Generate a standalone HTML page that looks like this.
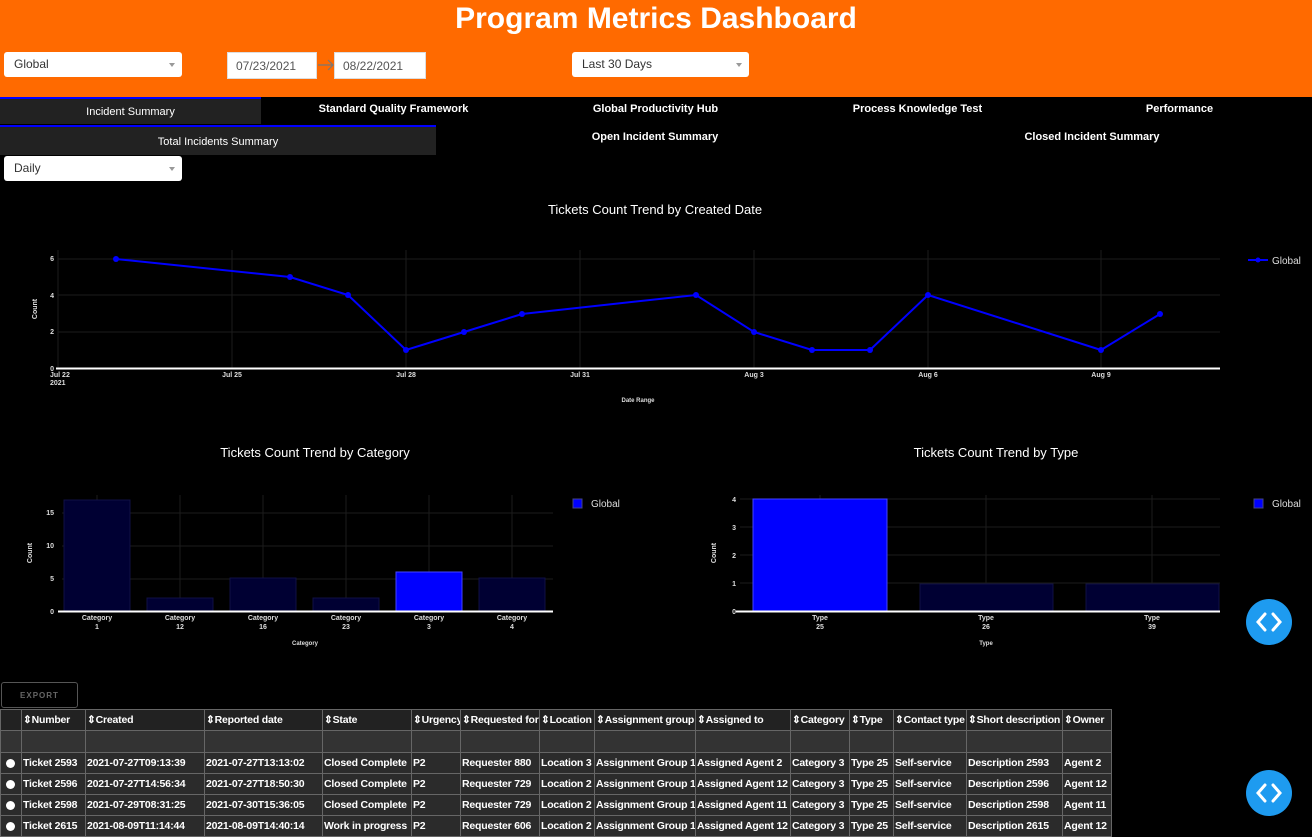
<!DOCTYPE html>
<html><head><meta charset="utf-8"><style>
*{box-sizing:border-box;margin:0;padding:0}
body{width:1312px;height:835px;background:#000;font-family:"Liberation Sans",sans-serif;position:relative;overflow:hidden;color:#fff}
.hdr{position:absolute;left:0;top:0;width:1312px;height:97px;background:#ff6a00}
.title{position:absolute;left:0;width:1312px;top:2px;text-align:center;font-size:30px;font-weight:bold;color:#fff}
.dd{position:absolute;background:#fff;border-radius:3px;color:#333;font-size:12px;padding:0 10px;line-height:24px;height:25px}
.dd:after{content:"";position:absolute;right:7px;top:11px;border:3.5px solid transparent;border-top:4px solid #999}
.date{position:absolute;top:52px;height:27px;background:#fff;border:1px solid #ddd;color:#555;font-size:12px;line-height:26px;padding-left:8px}
.tab{position:absolute;font-size:11px;font-weight:bold;text-align:center;color:#fff}
.tabsel{position:absolute;background:#222;border-top:2px solid #00f;font-size:11px;text-align:center;color:#fff}
svg text{font-family:"Liberation Sans",sans-serif}
table{position:absolute;left:0;top:709px;border-collapse:collapse;font-size:10.5px;font-weight:bold;color:#fff;table-layout:fixed;width:1111px;letter-spacing:-0.2px}
td{border:1px solid #666;background:#2b2b2b;height:21px;padding:0 1px;white-space:nowrap;overflow:hidden}
tr.h td{background:#222}
tr.f td{background:#333;height:22px}
.rd{display:inline-block;width:9px;height:9px;border-radius:50%;background:#fff;margin-left:4px;vertical-align:middle}
.btn{position:absolute;width:46px;height:46px;border-radius:50%;background:#1e9bf0}
</style></head><body>
<div class="hdr"></div>
<div class="title">Program Metrics Dashboard</div>
<div class="dd" style="left:4px;top:52px;width:178px">Global</div>
<div class="date" style="left:227px;width:90px">07/23/2021</div>
<svg style="position:absolute;left:317px;top:58px" width="18" height="14"><path d="M1 7 H16 M11 2 L16 7 L11 12" stroke="#777" stroke-width="1.2" fill="none"/></svg>
<div class="date" style="left:334px;width:92px">08/22/2021</div>
<div class="dd" style="left:572px;top:52px;width:177px">Last 30 Days</div>

<div class="tabsel" style="left:0;top:97px;width:261px;height:27px;line-height:27px">Incident Summary</div>
<div class="tab" style="left:263px;top:103px;width:261px">Standard Quality Framework</div>
<div class="tab" style="left:525px;top:103px;width:261px">Global Productivity Hub</div>
<div class="tab" style="left:787px;top:103px;width:261px">Process Knowledge Test</div>
<div class="tab" style="left:1049px;top:103px;width:261px">Performance</div>
<div class="tabsel" style="left:0;top:125px;width:436px;height:30px;line-height:30px">Total Incidents Summary</div>
<div class="tab" style="left:437px;top:131px;width:436px">Open Incident Summary</div>
<div class="tab" style="left:874px;top:131px;width:436px">Closed Incident Summary</div>
<div class="dd" style="left:4px;top:156px;width:178px">Daily</div>

<svg style="position:absolute;left:0;top:0" width="1312" height="700">
<text x="655" y="214" font-size="13" fill="#fff" text-anchor="middle">Tickets Count Trend by Created Date</text>
<g stroke="#1c1c1c" stroke-width="1">
<line x1="58" y1="259" x2="1220" y2="259"/><line x1="58" y1="295" x2="1220" y2="295"/><line x1="58" y1="332" x2="1220" y2="332"/>
<line x1="232" y1="250" x2="232" y2="368"/><line x1="406" y1="250" x2="406" y2="368"/><line x1="580" y1="250" x2="580" y2="368"/><line x1="754" y1="250" x2="754" y2="368"/><line x1="928" y1="250" x2="928" y2="368"/><line x1="1101" y1="250" x2="1101" y2="368"/><line x1="58" y1="250" x2="58" y2="368"/>
</g>
<line x1="56" y1="368.5" x2="1220" y2="368.5" stroke="#fff" stroke-width="2"/>
<polyline fill="none" stroke="#00f" stroke-width="2" points="116,259 290,277 348,295 406,350 464,332 522,314 696,295 754,332 812,350 870,350 928,295 1101,350 1160,314"/>
<g fill="#00f"><circle cx="116" cy="259" r="3"/><circle cx="290" cy="277" r="3"/><circle cx="348" cy="295" r="3"/><circle cx="406" cy="350" r="3"/><circle cx="464" cy="332" r="3"/><circle cx="522" cy="314" r="3"/><circle cx="696" cy="295" r="3"/><circle cx="754" cy="332" r="3"/><circle cx="812" cy="350" r="3"/><circle cx="870" cy="350" r="3"/><circle cx="928" cy="295" r="3"/><circle cx="1101" cy="350" r="3"/><circle cx="1160" cy="314" r="3"/></g>
<g font-size="7" fill="#ddd" font-weight="bold"><text x="54" y="261" text-anchor="end">6</text><text x="54" y="298" text-anchor="end">4</text><text x="54" y="334" text-anchor="end">2</text><text x="54" y="371" text-anchor="end">0</text>
<text x="50" y="377">Jul 22</text><text x="50" y="385">2021</text><text x="232" y="377" text-anchor="middle">Jul 25</text><text x="406" y="377" text-anchor="middle">Jul 28</text><text x="580" y="377" text-anchor="middle">Jul 31</text><text x="754" y="377" text-anchor="middle">Aug 3</text><text x="928" y="377" text-anchor="middle">Aug 6</text><text x="1101" y="377" text-anchor="middle">Aug 9</text>
<text x="638" y="402" text-anchor="middle" font-size="6">Date Range</text>
<text transform="translate(37,309) rotate(-90)" text-anchor="middle">Count</text></g>
<line x1="1248" y1="260" x2="1268" y2="260" stroke="#00f" stroke-width="2"/><circle cx="1258" cy="260" r="2.5" fill="#00f"/>
<text x="1272" y="264" font-size="10" fill="#ddd">Global</text>

<text x="315" y="457" font-size="13" fill="#fff" text-anchor="middle">Tickets Count Trend by Category</text>
<g stroke="#1c1c1c"><line x1="62" y1="513" x2="553" y2="513"/><line x1="62" y1="546" x2="553" y2="546"/><line x1="62" y1="579" x2="553" y2="579"/>
<line x1="97" y1="495" x2="97" y2="611"/><line x1="180" y1="495" x2="180" y2="611"/><line x1="263" y1="495" x2="263" y2="611"/><line x1="346" y1="495" x2="346" y2="611"/><line x1="429" y1="495" x2="429" y2="611"/><line x1="512" y1="495" x2="512" y2="611"/></g>
<g fill="#000033" stroke="#111144"><rect x="64" y="500" width="66" height="111"/><rect x="147" y="598" width="66" height="13"/><rect x="230" y="578" width="66" height="33"/><rect x="313" y="598" width="66" height="13"/><rect x="479" y="578" width="66" height="33"/></g>
<rect x="396" y="572" width="66" height="39" fill="#00f" stroke="#44f"/>
<line x1="58" y1="611.5" x2="553" y2="611.5" stroke="#fff" stroke-width="2"/>
<g font-size="7" fill="#ddd" text-anchor="middle" font-weight="bold"><text x="54" y="515" text-anchor="end">15</text><text x="54" y="548" text-anchor="end">10</text><text x="54" y="581" text-anchor="end">5</text><text x="54" y="614" text-anchor="end">0</text>
<text x="97" y="620">Category</text><text x="97" y="629">1</text><text x="180" y="620">Category</text><text x="180" y="629">12</text><text x="263" y="620">Category</text><text x="263" y="629">16</text><text x="346" y="620">Category</text><text x="346" y="629">23</text><text x="429" y="620">Category</text><text x="429" y="629">3</text><text x="512" y="620">Category</text><text x="512" y="629">4</text>
<text x="305" y="645" font-size="6">Category</text><text transform="translate(32,553) rotate(-90)">Count</text></g>
<rect x="573" y="499" width="9" height="9" fill="#00f" stroke="#448"/><text x="591" y="507" font-size="10" fill="#ddd">Global</text>

<text x="996" y="457" font-size="13" fill="#fff" text-anchor="middle">Tickets Count Trend by Type</text>
<g stroke="#1c1c1c"><line x1="740" y1="499" x2="1220" y2="499"/><line x1="740" y1="527" x2="1220" y2="527"/><line x1="740" y1="555" x2="1220" y2="555"/><line x1="740" y1="583" x2="1220" y2="583"/>
<line x1="820" y1="495" x2="820" y2="611"/><line x1="986" y1="495" x2="986" y2="611"/><line x1="1152" y1="495" x2="1152" y2="611"/></g>
<rect x="753" y="499" width="134" height="112" fill="#00f" stroke="#44f"/>
<g fill="#000033" stroke="#111144"><rect x="920" y="584" width="133" height="27"/><rect x="1086" y="584" width="133" height="27"/></g>
<line x1="736" y1="611.5" x2="1220" y2="611.5" stroke="#fff" stroke-width="2"/>
<g font-size="7" fill="#ddd" text-anchor="middle" font-weight="bold"><text x="736" y="502" text-anchor="end">4</text><text x="736" y="530" text-anchor="end">3</text><text x="736" y="558" text-anchor="end">2</text><text x="736" y="586" text-anchor="end">1</text><text x="736" y="614" text-anchor="end">0</text>
<text x="820" y="620">Type</text><text x="820" y="629">25</text><text x="986" y="620">Type</text><text x="986" y="629">26</text><text x="1152" y="620">Type</text><text x="1152" y="629">39</text>
<text x="986" y="645" font-size="6">Type</text><text transform="translate(716,553) rotate(-90)">Count</text></g>
<rect x="1254" y="499" width="9" height="9" fill="#00f" stroke="#448"/><text x="1272" y="507" font-size="10" fill="#ddd">Global</text>
</svg>

<div class="btn" style="left:1246px;top:599px"><svg width="46" height="46"><path d="M19 15 L12 23 L19 31 M27 15 L34 23 L27 31" stroke="#fff" stroke-width="3" fill="none" stroke-linecap="round"/></svg></div>
<div class="btn" style="left:1246px;top:770px"><svg width="46" height="46"><path d="M19 15 L12 23 L19 31 M27 15 L34 23 L27 31" stroke="#fff" stroke-width="3" fill="none" stroke-linecap="round"/></svg></div>

<div style="position:absolute;left:1px;top:682px;width:77px;height:26px;border:1px solid #555;border-radius:3px;color:#666;font-size:8px;letter-spacing:1px;font-weight:bold;line-height:25px;text-align:center">EXPORT</div>
<table>
<colgroup><col style="width:21px"><col style="width:64px"><col style="width:119px"><col style="width:118px"><col style="width:89px"><col style="width:49px"><col style="width:79px"><col style="width:55px"><col style="width:101px"><col style="width:95px"><col style="width:59px"><col style="width:44px"><col style="width:73px"><col style="width:96px"><col style="width:49px"></colgroup>
<tr class="h"><td></td><td>⇕Number</td><td>⇕Created</td><td>⇕Reported date</td><td>⇕State</td><td>⇕Urgency</td><td>⇕Requested for</td><td>⇕Location</td><td>⇕Assignment group</td><td>⇕Assigned to</td><td>⇕Category</td><td>⇕Type</td><td>⇕Contact type</td><td>⇕Short description</td><td>⇕Owner</td></tr>
<tr class="f"><td></td><td></td><td></td><td></td><td></td><td></td><td></td><td></td><td></td><td></td><td></td><td></td><td></td><td></td><td></td></tr>
<tr><td><span class="rd"></span></td><td>Ticket 2593</td><td>2021-07-27T09:13:39</td><td>2021-07-27T13:13:02</td><td>Closed Complete</td><td>P2</td><td>Requester 880</td><td>Location 3</td><td>Assignment Group 1</td><td>Assigned Agent 2</td><td>Category 3</td><td>Type 25</td><td>Self-service</td><td>Description 2593</td><td>Agent 2</td></tr>
<tr><td><span class="rd"></span></td><td>Ticket 2596</td><td>2021-07-27T14:56:34</td><td>2021-07-27T18:50:30</td><td>Closed Complete</td><td>P2</td><td>Requester 729</td><td>Location 2</td><td>Assignment Group 1</td><td>Assigned Agent 12</td><td>Category 3</td><td>Type 25</td><td>Self-service</td><td>Description 2596</td><td>Agent 12</td></tr>
<tr><td><span class="rd"></span></td><td>Ticket 2598</td><td>2021-07-29T08:31:25</td><td>2021-07-30T15:36:05</td><td>Closed Complete</td><td>P2</td><td>Requester 729</td><td>Location 2</td><td>Assignment Group 1</td><td>Assigned Agent 11</td><td>Category 3</td><td>Type 25</td><td>Self-service</td><td>Description 2598</td><td>Agent 11</td></tr>
<tr><td><span class="rd"></span></td><td>Ticket 2615</td><td>2021-08-09T11:14:44</td><td>2021-08-09T14:40:14</td><td>Work in progress</td><td>P2</td><td>Requester 606</td><td>Location 2</td><td>Assignment Group 1</td><td>Assigned Agent 12</td><td>Category 3</td><td>Type 25</td><td>Self-service</td><td>Description 2615</td><td>Agent 12</td></tr>
</table>
</body></html>
